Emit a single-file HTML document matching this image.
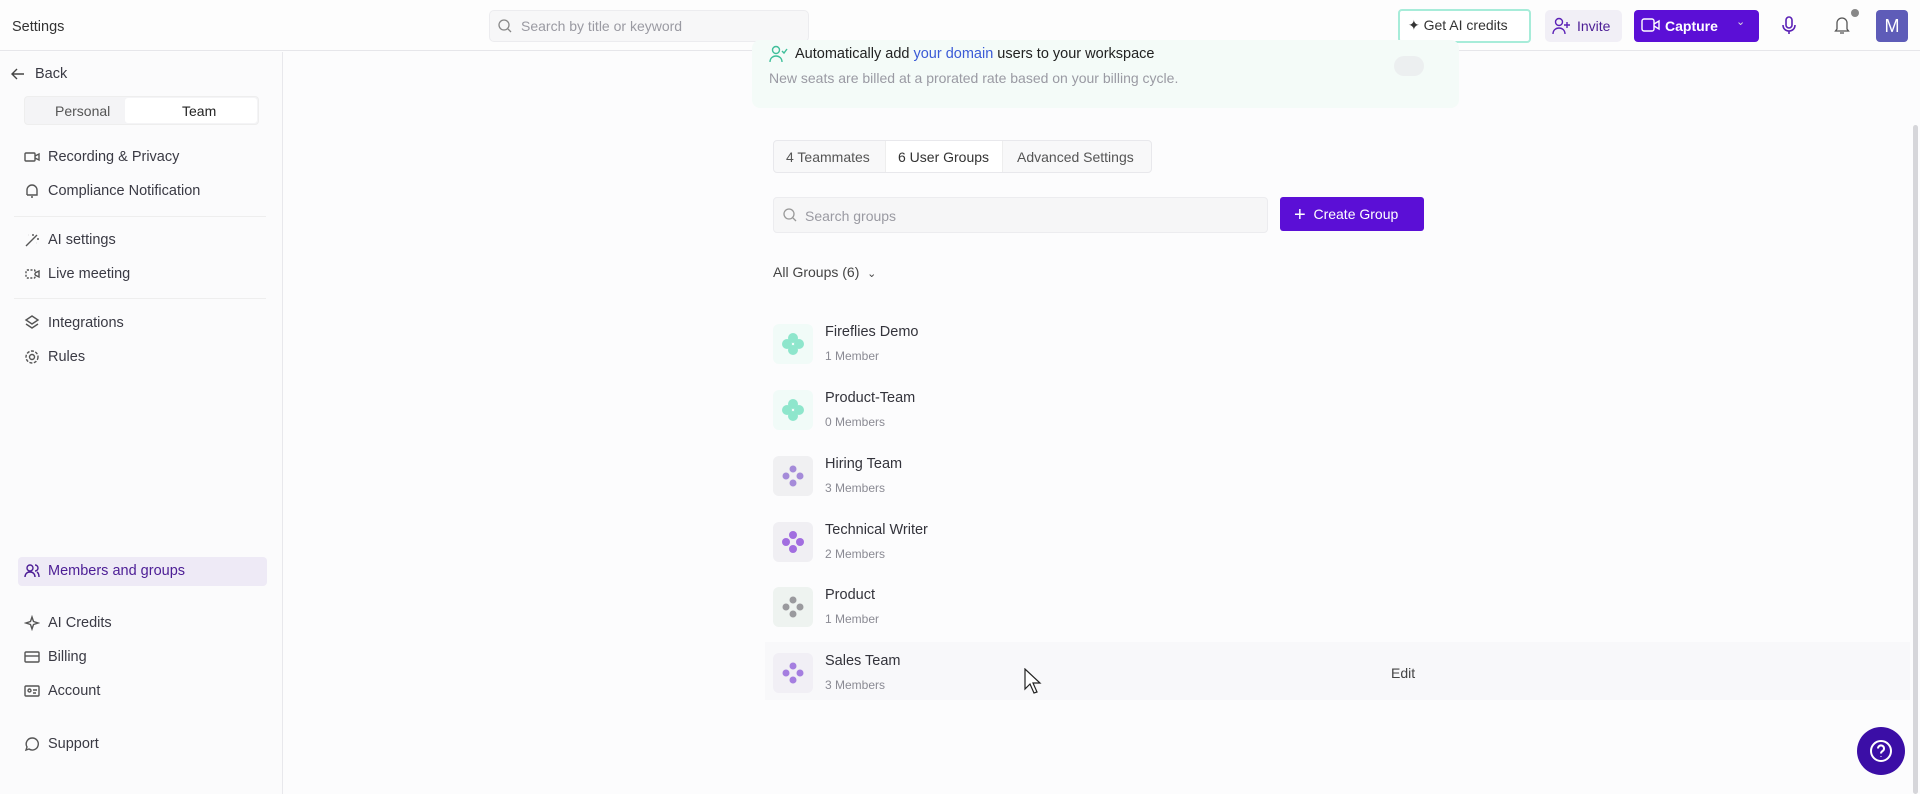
<!DOCTYPE html>
<html><head><meta charset="utf-8"><style>
*{box-sizing:border-box;margin:0;padding:0}
body{width:1920px;height:794px;background:#fcfcfd;font-family:"Liberation Sans",sans-serif;color:#2a2a33;position:relative;overflow:hidden}
.a{position:absolute}
.top{left:0;top:0;width:1920px;height:51px;border-bottom:1px solid #e6e6ea;background:#fdfdfd}
.side{left:0;top:52px;width:283px;height:742px;border-right:1px solid #e8e8ec;background:#fbfbfc}
.mi{position:absolute;left:24px;font-size:14.5px;color:#3a3a44;display:flex;align-items:center;gap:8px}
.mi svg{width:16px;height:16px;stroke:#555;fill:none;stroke-width:1.4}
.hr{position:absolute;left:50px;width:466px;height:1px;background:#eee}
.row .n{font-size:14.5px;color:#33333b}
.row .s{font-size:12px;color:#8a8a93;margin-top:9px}
.ic{position:absolute;width:40px;height:40px;border-radius:6px}
</style></head><body>
<div class="a top"></div>
<div class="a" style="left:12px;top:19px;font-size:14.5px;color:#333">Settings</div>
<div class="a" style="left:489px;top:10px;width:320px;height:32px;border:1px solid #ececef;border-radius:5px;background:#f7f7f8"></div>
<svg class="a" style="left:497px;top:18px" width="16" height="16" viewBox="0 0 16 16" fill="none" stroke="#888" stroke-width="1.3"><circle cx="7" cy="7" r="5"/><path d="M11 11l3 3"/></svg>
<div class="a" style="left:521px;top:18px;font-size:14px;color:#9a9aa2">Search by title or keyword</div>
<div class="a" style="left:1398px;top:9px;width:133px;height:34px;border:2px solid #a7ecd9;border-radius:4px;background:#fff"></div>
<div class="a" style="left:1408px;top:17px;font-size:14px;color:#333">✦ Get AI credits</div>
<div class="a" style="left:1545px;top:10px;width:77px;height:32px;border-radius:5px;background:#f1eff6"></div>
<svg class="a" style="left:1552px;top:17px" width="20" height="18" viewBox="0 0 20 18" fill="none" stroke="#5b21b6" stroke-width="1.4"><circle cx="7" cy="5" r="3.5"/><path d="M1 17c0-4 3-6 6-6s6 2 6 6M15 5v6M12 8h6"/></svg>
<div class="a" style="left:1577px;top:18px;font-size:14px;color:#4c1d95">Invite</div>
<div class="a" style="left:1634px;top:10px;width:125px;height:32px;border-radius:4px;background:#5b0fd6"></div>
<svg class="a" style="left:1641px;top:17px" width="20" height="16" viewBox="0 0 20 16" fill="none" stroke="#fff" stroke-width="1.4"><rect x="1" y="2" width="12" height="12" rx="2"/><path d="M13 7l5-3v8l-5-3"/></svg>
<div class="a" style="left:1665px;top:18px;font-size:14px;color:#fff;font-weight:bold">Capture</div>
<div class="a" style="left:1736px;top:15px;color:#ddd;font-size:11px">⌄</div>
<svg class="a" style="left:1780px;top:15px" width="18" height="22" viewBox="0 0 18 22" fill="none" stroke="#5b21b6" stroke-width="1.6"><rect x="6" y="2" width="6" height="11" rx="3"/><path d="M3 10c0 4 3 6 6 6s6-2 6-6M9 16v3"/></svg>
<svg class="a" style="left:1833px;top:15px" width="18" height="20" viewBox="0 0 18 20" fill="none" stroke="#555" stroke-width="1.3"><path d="M4 14V8a5 5 0 0110 0v6l1.5 2h-13zM7 18h4"/></svg>
<div class="a" style="left:1851px;top:9px;width:8px;height:8px;border-radius:50%;background:#888"></div>
<div class="a" style="left:1876px;top:10px;width:32px;height:32px;border-radius:4px;background:#5e5cb8;color:#fff;font-size:18px;text-align:center;line-height:32px">M</div>

<div class="a side"></div>
<svg class="a" style="left:10px;top:66px" width="16" height="16" viewBox="0 0 16 16" fill="none" stroke="#444" stroke-width="1.4"><path d="M14 8H2M7 3L2 8l5 5"/></svg>
<div class="a" style="left:35px;top:66px;font-size:14.5px;color:#3a3a44">Back</div>
<div class="a" style="left:24px;top:96px;width:235px;height:29px;border:1px solid #eee;border-radius:4px;background:#f4f4f6"></div>
<div class="a" style="left:125px;top:98px;width:132px;height:25px;background:#fff;border-radius:3px"></div>
<div class="a" style="left:55px;top:103px;font-size:14px;color:#555">Personal</div>
<div class="a" style="left:182px;top:103px;font-size:14px;color:#222">Team</div>
<div class="mi" style="top:149px"><svg viewBox="0 0 16 16"><rect x="1" y="4" width="10" height="8" rx="1"/><path d="M11 7l4-2v6l-4-2"/></svg>Recording &amp; Privacy</div>
<div class="mi" style="top:183px"><svg viewBox="0 0 16 16"><path d="M3 12V7a5 5 0 0110 0v5H3M7 14h2"/></svg>Compliance Notification</div>
<div class="hr" style="left:14px;width:252px;top:216px"></div>
<div class="mi" style="top:232px"><svg viewBox="0 0 16 16"><path d="M2 14L13 3M9 2v2M13 7h2M4 3h.1M12 11h.1"/></svg>AI settings</div>
<div class="mi" style="top:266px"><svg viewBox="0 0 16 16"><rect x="2" y="4" width="9" height="8" rx="1" stroke-dasharray="2 1.5"/><path d="M11 7l4-2v6l-4-2"/></svg>Live meeting</div>
<div class="hr" style="left:14px;width:252px;top:298px"></div>
<div class="mi" style="top:315px"><svg viewBox="0 0 16 16"><path d="M8 1l6 4-6 4-6-4zM2 9l6 4 6-4"/></svg>Integrations</div>
<div class="mi" style="top:349px"><svg viewBox="0 0 16 16"><circle cx="8" cy="8" r="2.5"/><circle cx="8" cy="8" r="6" stroke-dasharray="3 1.5"/></svg>Rules</div>
<div class="a" style="left:18px;top:557px;width:249px;height:29px;background:#eeeaf6;border-radius:4px"></div>
<div class="mi" style="top:563px;color:#4c1d95"><svg viewBox="0 0 16 16" style="stroke:#4c1d95"><circle cx="6" cy="5" r="3"/><path d="M1 14c0-3 2-5 5-5s5 2 5 5M11 2a3 3 0 010 6M13 9c1.5 1 2 3 2 5"/></svg>Members and groups</div>
<div class="mi" style="top:615px"><svg viewBox="0 0 16 16"><path d="M8 2l1.5 4.5L14 8l-4.5 1.5L8 14l-1.5-4.5L2 8l4.5-1.5z"/></svg>AI Credits</div>
<div class="mi" style="top:649px"><svg viewBox="0 0 16 16"><rect x="1" y="3" width="14" height="10" rx="1"/><path d="M1 7h14"/></svg>Billing</div>
<div class="mi" style="top:683px"><svg viewBox="0 0 16 16"><rect x="1" y="3" width="14" height="10" rx="1"/><circle cx="5.5" cy="7.5" r="1.5"/><path d="M9 7h4M9 10h3"/></svg>Account</div>
<div class="mi" style="top:736px"><svg viewBox="0 0 16 16"><path d="M8 2a6 6 0 11-3 11l-3 1 1-3A6 6 0 018 2z"/></svg>Support</div>

<div class="a" style="left:752px;top:40px;width:707px;height:68px;background:#f4fbf8;border-radius:8px"></div>
<svg class="a" style="left:768px;top:45px" width="20" height="18" viewBox="0 0 20 18" fill="none" stroke="#3fbf9a" stroke-width="1.4"><circle cx="8" cy="5" r="3.5"/><path d="M2 17c0-4 3-6 6-6s6 2 6 6M14 6l2 2 3-4"/></svg>
<div class="a" style="left:795px;top:46px;font-size:14.5px;color:#222">Automatically add <span style="color:#3b5bd6">your domain</span> users to your workspace</div>
<div class="a" style="left:769px;top:70px;font-size:14px;color:#9a9aa3">New seats are billed at a prorated rate based on your billing cycle.</div>
<div class="a" style="left:1394px;top:56px;width:30px;height:20px;border-radius:10px;background:#eceff0"></div>

<div class="a" style="left:773px;top:140px;width:379px;height:33px;border:1px solid #e8e8ec;border-radius:4px;background:#f8f8f9"></div>
<div class="a" style="left:885px;top:141px;width:118px;height:31px;background:#fff;border-left:1px solid #eee;border-right:1px solid #eee"></div>
<div class="a" style="left:786px;top:149px;font-size:14px;color:#555">4 Teammates</div>
<div class="a" style="left:898px;top:149px;font-size:14px;color:#333">6 User Groups</div>
<div class="a" style="left:1017px;top:149px;font-size:14px;color:#555">Advanced Settings</div>

<div class="a" style="left:773px;top:197px;width:495px;height:36px;border:1px solid #ececef;border-radius:4px;background:#f6f6f7"></div>
<svg class="a" style="left:782px;top:207px" width="16" height="16" viewBox="0 0 16 16" fill="none" stroke="#999" stroke-width="1.3"><circle cx="7" cy="7" r="5"/><path d="M11 11l3 3"/></svg>
<div class="a" style="left:805px;top:208px;font-size:14px;color:#9a9aa2">Search groups</div>
<div class="a" style="left:1280px;top:197px;width:144px;height:34px;background:#5b0fd6;border-radius:3px;color:#fff;font-size:14px;line-height:34px;padding-left:14px"><span style="font-size:20px;vertical-align:-2px">+</span>&nbsp;&nbsp;Create Group</div>

<div class="a" style="left:773px;top:264px;font-size:14px;color:#444">All Groups (6) &nbsp;<span style="font-size:11px">⌄</span></div>

<div class="a" style="left:765px;top:642px;width:1145px;height:58px;background:#f8f8fa"></div>

<div class="a row" style="left:825px;top:324px"><div class="n">Fireflies Demo</div><div class="s">1 Member</div></div>
<div class="a row" style="left:825px;top:390px"><div class="n">Product-Team</div><div class="s">0 Members</div></div>
<div class="a row" style="left:825px;top:456px"><div class="n">Hiring Team</div><div class="s">3 Members</div></div>
<div class="a row" style="left:825px;top:522px"><div class="n">Technical Writer</div><div class="s">2 Members</div></div>
<div class="a row" style="left:825px;top:587px"><div class="n">Product</div><div class="s">1 Member</div></div>
<div class="a row" style="left:825px;top:653px"><div class="n">Sales Team</div><div class="s">3 Members</div></div>
<div class="a" style="left:1391px;top:665px;font-size:14px;color:#444">Edit</div>

<div class="ic" style="left:773px;top:324px;background:#f1fbf8"></div>
<div class="ic" style="left:773px;top:390px;background:#f1fbf8"></div>
<div class="ic" style="left:773px;top:456px;background:#f0f0f2"></div>
<div class="ic" style="left:773px;top:522px;background:#f0eff3"></div>
<div class="ic" style="left:773px;top:587px;background:#eef3f0"></div>
<div class="ic" style="left:773px;top:653px;background:#f1eff5"></div>
<svg class="a" style="left:773px;top:324px" width="40" height="370" viewBox="0 0 40 370">
<g fill="#8ee6cc"><circle cx="20" cy="14" r="5"/><circle cx="14" cy="20" r="5"/><circle cx="26" cy="20" r="5"/><circle cx="20" cy="26" r="5"/></g>
<g fill="#8ee6cc" transform="translate(0,66)"><circle cx="20" cy="14" r="5"/><circle cx="14" cy="20" r="5"/><circle cx="26" cy="20" r="5"/><circle cx="20" cy="26" r="5"/></g>
<g fill="#a58bd9" transform="translate(0,132)"><circle cx="20" cy="13" r="3.5"/><circle cx="13" cy="20" r="3.5"/><circle cx="27" cy="20" r="3.5"/><circle cx="20" cy="27" r="3.5"/></g>
<g fill="#a26ee0" transform="translate(0,198)"><circle cx="20" cy="13" r="4"/><circle cx="13" cy="20" r="4"/><circle cx="27" cy="20" r="4"/><circle cx="20" cy="27" r="4"/></g>
<g fill="#9a9a9e" transform="translate(0,263)"><circle cx="20" cy="13" r="3.5"/><circle cx="13" cy="20" r="3.5"/><circle cx="27" cy="20" r="3.5"/><circle cx="20" cy="27" r="3.5"/></g>
<g fill="#a57ee0" transform="translate(0,329)"><circle cx="20" cy="13" r="3.5"/><circle cx="13" cy="20" r="3.5"/><circle cx="27" cy="20" r="3.5"/><circle cx="20" cy="27" r="3.5"/></g>
</svg>
<svg class="a" style="left:1023px;top:668px" width="20" height="28" viewBox="0 0 20 28"><path d="M2 1v20l5-5 4 9 3-1-4-9h7z" fill="#fff" stroke="#222" stroke-width="1.2"/></svg>

<div class="a" style="left:1913px;top:125px;width:5px;height:669px;background:#d6d6da;border-radius:3px"></div>
<div class="a" style="left:1857px;top:727px;width:48px;height:48px;border-radius:50%;background:#3b0ea6"></div>
<svg class="a" style="left:1868px;top:738px" width="26" height="26" viewBox="0 0 26 26" fill="none" stroke="#fff" stroke-width="2"><circle cx="13" cy="13" r="10"/><path d="M10 10.5a3 3 0 115 2.2c-1.3.8-2 1.3-2 2.8M13 18.5v.5"/></svg>
</body></html>
